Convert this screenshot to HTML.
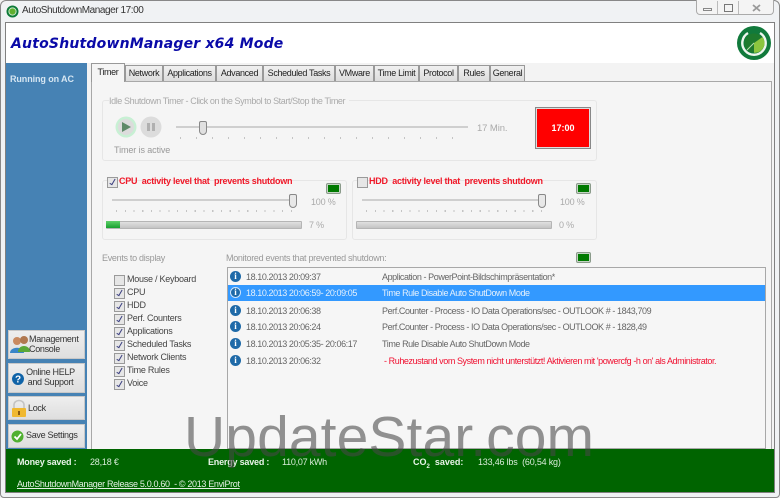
<!DOCTYPE html>
<html><head><meta charset="utf-8">
<style>
html,body{margin:0;padding:0}
body{width:780px;height:498px;overflow:hidden;position:relative;background:#f3f3f3;font-family:"Liberation Sans",sans-serif;font-size:9px;color:#555;filter:blur(.3px)}
.a{position:absolute;white-space:nowrap}
.tab{position:absolute;top:65px;height:16px;background:linear-gradient(#f0f0f0,#dcdcdc);border:1px solid #999;border-bottom:0;box-sizing:border-box;text-align:center;font-size:9px;letter-spacing:-.35px;line-height:15px;color:#222}
.grp{position:absolute;border:1px solid #e6e6e6;border-radius:3px;box-sizing:border-box}
.cb{position:absolute;width:9px;height:9px;border:1px solid #9a9a9a;background:#e6e6e6;box-sizing:content-box}
.cb.c:after{content:"";position:absolute;left:3px;top:0;width:2px;height:6px;border:solid #3a3f80;border-width:0 1.3px 1.3px 0;transform:rotate(30deg)}
.lbl{position:absolute;left:127px;font-size:9px;letter-spacing:-.25px;color:#444;white-space:nowrap}
.led{position:absolute;width:13px;height:9px;background:#007a00;border:1px solid #c4d4c4;outline:1px solid #8a9a8a;border-radius:1px;box-sizing:border-box}
.side{position:absolute;left:8px;width:77px;background:linear-gradient(#eeeeee,#dedede);border:1px solid #c8c8c8;box-sizing:border-box;font-size:9px;letter-spacing:-.3px;color:#333;text-align:center;line-height:10px}
.row{position:absolute;left:228px;width:537px;height:17px;font-size:9px;letter-spacing:-.42px;color:#666;line-height:18px}
.row .d{position:absolute;left:18px;white-space:nowrap}
.row .t{position:absolute;left:154px;white-space:nowrap}
.i{position:absolute;left:2px;top:3px;width:11px;height:11px;border-radius:50%;background:#1f6aa8;color:#fff;font:bold 9px/11px "Liberation Serif",serif;letter-spacing:0;text-align:center}
.track{position:absolute;height:2px;background:#cfcfcf}
.thumb{position:absolute;width:8px;height:14px;background:#e8e8e8;border:1px solid #888;border-radius:2px 2px 4px 4px;box-sizing:border-box}
.ticks{position:absolute;height:2px;background-image:repeating-linear-gradient(90deg,#c4c4c4 0 1px,transparent 1px 16px)}
.ticks.s{background-image:repeating-linear-gradient(90deg,#c4c4c4 0 1px,transparent 1px 8.75px)}
.bar{position:absolute;height:8px;width:196px;background:linear-gradient(#e0e0e0,#c4c4c4);border:1px solid #b5b5b5;box-sizing:border-box;border-radius:1px}
.r{font-weight:bold;color:#f01828;font-size:9px;letter-spacing:-.25px;position:absolute;white-space:nowrap}
.p{position:absolute;font-size:9px;letter-spacing:-.2px;color:#aaa;white-space:nowrap}
</style></head><body>
<div class="a" style="left:0;top:0;width:780px;height:498px;background:#f0f2f4;border:1px solid #888;border-radius:6px 6px 4px 4px;box-sizing:border-box"></div>
<svg class="a" style="left:6px;top:5px" width="13" height="13"><circle cx="6.5" cy="6.5" r="6" fill="#0d7a38"/><circle cx="6.5" cy="6.5" r="3.6" fill="#5fae2e" stroke="#c8e8c8"/></svg>
<div class="a" style="left:22px;top:5px;font-size:10px;letter-spacing:-.44px;color:#333">AutoShutdownManager 17:00</div>
<div class="a" style="left:696px;top:0;width:78px;height:15px;background:#f4f4f4;border:1px solid #aaa;border-top:0;border-radius:0 0 4px 4px;box-sizing:border-box"></div>
<div class="a" style="left:717px;top:1px;width:1px;height:13px;background:#bbb"></div>
<div class="a" style="left:738px;top:1px;width:1px;height:13px;background:#bbb"></div>
<div class="a" style="left:703px;top:8px;width:9px;height:3px;border:1px solid #888;box-sizing:border-box"></div>
<div class="a" style="left:724px;top:4px;width:9px;height:8px;border:1px solid #777;box-sizing:border-box"></div>
<svg class="a" style="left:752px;top:4px" width="9" height="8"><path d="M1 1L8 7M8 1L1 7" stroke="#999" stroke-width="1.8" fill="none"/></svg>

<div class="a" style="left:5px;top:22px;width:770px;height:471px;background:#f3f3f3;border:1px solid #808080;box-sizing:border-box"></div>
<div class="a" style="left:6px;top:23px;width:768px;height:40px;background:#fff"></div>
<div class="a" style="left:11px;top:36px;font-family:'DejaVu Sans',sans-serif;font-size:14px;font-weight:bold;font-style:italic;color:#0a0aa8;letter-spacing:.2px">AutoShutdownManager x64 Mode</div>
<svg class="a" style="left:737px;top:26px" width="34" height="34" viewBox="0 0 34 34"><circle cx="17" cy="17" r="17" fill="#117a3c"/><path d="M11 7A11.7 11.7 0 1 0 23 7" fill="none" stroke="#eef6ee" stroke-width="2.4"/><circle cx="17" cy="17" r="9.5" fill="#1e7a2e"/><path d="M17 17L25.5 11A9.8 9.8 0 0 1 17 26.8Z" fill="#8cc63f"/><path d="M17 17L10 24" stroke="#b8e0b0" stroke-width="1" fill="none"/></svg>

<div class="a" style="left:6px;top:63px;width:81px;height:386px;background:#4682b4"></div>
<div class="a" style="left:10px;top:74px;font-size:9px;letter-spacing:-.1px;font-weight:bold;color:#d6e6f2">Running on AC</div>

<div class="a" style="left:91px;top:81px;width:681px;height:368px;background:#f5f5f5;border:1px solid #a8a8a8;border-bottom:0;box-sizing:border-box"></div>
<div class="tab" style="left:91px;top:63px;width:34px;height:19px;background:#f5f5f5;z-index:2;line-height:16px">Timer</div>
<div class="tab" style="left:125px;width:38px">Network</div>
<div class="tab" style="left:163px;width:53px">Applications</div>
<div class="tab" style="left:216px;width:47px">Advanced</div>
<div class="tab" style="left:263px;width:72px">Scheduled Tasks</div>
<div class="tab" style="left:335px;width:39px">VMware</div>
<div class="tab" style="left:374px;width:45px">Time Limit</div>
<div class="tab" style="left:419px;width:39px">Protocol</div>
<div class="tab" style="left:458px;width:32px">Rules</div>
<div class="tab" style="left:490px;width:35px">General</div>

<div class="grp" style="left:102px;top:100px;width:495px;height:61px"></div>
<div class="a" style="left:109px;top:96px;font-size:9px;letter-spacing:-.4px;color:#aaa;background:#f5f5f5;padding-right:4px">Idle Shutdown Timer - Click on the Symbol to Start/Stop the Timer</div>
<svg class="a" style="left:115px;top:116px" width="22" height="22"><circle cx="11" cy="11" r="10.5" fill="#c8f0d4"/><circle cx="11" cy="11" r="8" fill="#dcdcdc"/><path d="M7 6L16 11L7 16Z" fill="#5e8a68"/></svg>
<svg class="a" style="left:140px;top:116px" width="22" height="22"><circle cx="11" cy="11" r="10.5" fill="#dcdcdc"/><rect x="7" y="7" width="3" height="8" fill="#b0b0b0"/><rect x="12" y="7" width="3" height="8" fill="#b0b0b0"/></svg>
<div class="a" style="left:114px;top:145px;font-size:9px;letter-spacing:-.1px;color:#999">Timer is active</div>
<div class="track" style="left:176px;top:126px;width:292px"></div>
<div class="thumb" style="left:199px;top:121px;background:#e0e0e0"></div>
<div class="ticks" style="left:180px;top:137px;width:288px"></div>
<div class="a" style="left:477px;top:123px;font-size:9.5px;letter-spacing:-.1px;color:#aaa">17 Min.</div>
<div class="a" style="left:535px;top:107px;width:56px;height:42px;background:#f00;border:2px solid #ddd;outline:1px solid #888;outline-offset:-1px;box-sizing:border-box;text-align:center;color:#fff;font-weight:bold;font-size:9px;line-height:38px">17:00</div>

<div class="grp" style="left:102px;top:180px;width:245px;height:60px"></div>
<div class="cb c" style="left:107px;top:177px"></div>
<div class="r" style="left:119px;top:176px">CPU&nbsp; activity level that&nbsp; prevents shutdown</div>
<div class="led" style="left:327px;top:184px"></div>
<div class="track" style="left:112px;top:199px;width:180px"></div>
<div class="thumb" style="left:289px;top:194px"></div>
<div class="ticks s" style="left:116px;top:210px;width:176px"></div>
<div class="p" style="left:311px;top:197px">100 %</div>
<div class="bar" style="left:106px;top:221px"></div>
<div class="a" style="left:106px;top:221px;width:14px;height:7px;background:linear-gradient(#5fd06a,#18a030)"></div>
<div class="p" style="left:309px;top:220px">7 %</div>

<div class="grp" style="left:352px;top:180px;width:245px;height:60px"></div>
<div class="cb" style="left:357px;top:177px"></div>
<div class="r" style="left:369px;top:176px">HDD&nbsp; activity level that&nbsp; prevents shutdown</div>
<div class="led" style="left:577px;top:184px"></div>
<div class="track" style="left:362px;top:199px;width:180px"></div>
<div class="thumb" style="left:538px;top:194px"></div>
<div class="ticks s" style="left:366px;top:210px;width:176px"></div>
<div class="p" style="left:560px;top:197px">100 %</div>
<div class="bar" style="left:356px;top:221px"></div>
<div class="p" style="left:559px;top:220px">0 %</div>

<div class="a" style="left:102px;top:253px;font-size:9px;letter-spacing:-.3px;color:#999">Events to display</div>
<div class="a" style="left:226px;top:253px;font-size:9px;letter-spacing:-.3px;color:#999">Monitored events that prevented shutdown:</div>
<div class="led" style="left:577px;top:253px"></div>

<div class="cb" style="left:114px;top:275px"></div><div class="lbl" style="top:274px">Mouse / Keyboard</div>
<div class="cb c" style="left:114px;top:288px"></div><div class="lbl" style="top:287px">CPU</div>
<div class="cb c" style="left:114px;top:301px"></div><div class="lbl" style="top:300px">HDD</div>
<div class="cb c" style="left:114px;top:314px"></div><div class="lbl" style="top:313px">Perf. Counters</div>
<div class="cb c" style="left:114px;top:327px"></div><div class="lbl" style="top:326px">Applications</div>
<div class="cb c" style="left:114px;top:340px"></div><div class="lbl" style="top:339px">Scheduled Tasks</div>
<div class="cb c" style="left:114px;top:353px"></div><div class="lbl" style="top:352px">Network Clients</div>
<div class="cb c" style="left:114px;top:366px"></div><div class="lbl" style="top:365px">Time Rules</div>
<div class="cb c" style="left:114px;top:379px"></div><div class="lbl" style="top:378px">Voice</div>

<div class="a" style="left:227px;top:267px;width:539px;height:182px;background:#f6f6f6;border:1px solid #a8a8a8;box-sizing:border-box"></div>
<div class="row" style="top:268px"><span class="i">i</span><span class="d">18.10.2013 20:09:37</span><span class="t">Application - PowerPoint-Bildschimpräsentation*</span></div>
<div class="row" style="top:285px;height:16px;background:#3399ff;color:#e4f0fc;line-height:17px"><span class="i" style="top:2px;border:1px solid #cfe4fa;box-sizing:border-box;line-height:9px">i</span><span class="d">18.10.2013 20:06:59- 20:09:05</span><span class="t">Time Rule Disable Auto ShutDown Mode</span></div>
<div class="row" style="top:302px"><span class="i">i</span><span class="d">18.10.2013 20:06:38</span><span class="t">Perf.Counter - Process - IO Data Operations/sec - OUTLOOK # - 1843,709</span></div>
<div class="row" style="top:318px"><span class="i">i</span><span class="d">18.10.2013 20:06:24</span><span class="t">Perf.Counter - Process - IO Data Operations/sec - OUTLOOK # - 1828,49</span></div>
<div class="row" style="top:335px"><span class="i">i</span><span class="d">18.10.2013 20:05:35- 20:06:17</span><span class="t">Time Rule Disable Auto ShutDown Mode</span></div>
<div class="row" style="top:352px"><span class="i">i</span><span class="d">18.10.2013 20:06:32</span><span class="t" style="left:156px;color:#f01030">- Ruhezustand vom System nicht unterstützt! Aktivieren mit 'powercfg -h on' als Administrator.</span></div>

<div class="side" style="top:330px;height:29px"><svg class="a" style="left:1px;top:4px" width="20" height="19"><circle cx="7" cy="6" r="4" fill="#c98a60"/><path d="M0 18C0 11 14 11 14 18Z" fill="#3a86c8"/><circle cx="14" cy="5" r="4" fill="#b07850"/><path d="M8 17C8 9 20 9 20 17Z" fill="#5aa838"/></svg><span class="a" style="left:20px;top:3px;text-align:left">Management<br>Console</span></div>
<div class="side" style="top:363px;height:30px"><svg class="a" style="left:3px;top:9px" width="12" height="12"><circle cx="6" cy="6" r="6" fill="#0f63a8"/><text x="6" y="9.5" text-anchor="middle" font-size="10" font-weight="bold" fill="#fff" font-family="Liberation Sans" letter-spacing="0">?</text></svg><span class="a" style="left:17px;top:3px;width:49px">Online HELP<br>and Support</span></div>
<div class="side" style="top:396px;height:24px"><svg class="a" style="left:1px;top:2px" width="18" height="19"><path d="M4 10V6C4 0 14 0 14 6V10" fill="none" stroke="#c4c4c4" stroke-width="1.6"/><rect x="2" y="9" width="14" height="9" rx="1" fill="#f0b830"/><rect x="8" y="12" width="2" height="4" fill="#8a5a10"/></svg><span class="a" style="left:19px;top:6px">Lock</span></div>
<div class="side" style="top:424px;height:24px"><svg class="a" style="left:2px;top:5px" width="13" height="13"><circle cx="6.5" cy="6.5" r="6" fill="#4fb030"/><path d="M3.5 6.5L6 9L10 4" stroke="#fff" stroke-width="1.8" fill="none"/></svg><span class="a" style="left:17px;top:5px">Save Settings</span></div>

<div class="a" style="left:6px;top:449px;width:768px;height:43px;background:#006400"></div>
<div class="a" style="left:17px;top:457px;font-size:9px;letter-spacing:-.2px;font-weight:bold;color:#e8f4e8">Money saved :</div>
<div class="a" style="left:90px;top:457px;font-size:9px;letter-spacing:-.2px;color:#d8ecd8">28,18 €</div>
<div class="a" style="left:208px;top:457px;font-size:9px;letter-spacing:-.2px;font-weight:bold;color:#e8f4e8">Energy saved :</div>
<div class="a" style="left:282px;top:457px;font-size:9px;letter-spacing:-.25px;color:#d8ecd8">110,07 kWh</div>
<div class="a" style="left:413px;top:457px;font-size:9px;font-weight:bold;color:#e8f4e8">CO<sub style="font-size:6px;line-height:0">2</sub>&nbsp; saved:</div>
<div class="a" style="left:478px;top:457px;font-size:9px;letter-spacing:-.2px;color:#d8ecd8">133,46 lbs&nbsp; (60,54 kg)</div>
<div class="a" style="left:17px;top:479px;font-size:9px;letter-spacing:-.33px;color:#e4f0e4;text-decoration:underline">AutoShutdownManager Release 5.0.0.60&nbsp; - © 2013 EnviProt</div>

<div class="a" style="left:184px;top:407px;font-size:57px;line-height:60px;color:rgba(70,70,70,.58);letter-spacing:.1px">UpdateStar.com</div>
</body></html>
